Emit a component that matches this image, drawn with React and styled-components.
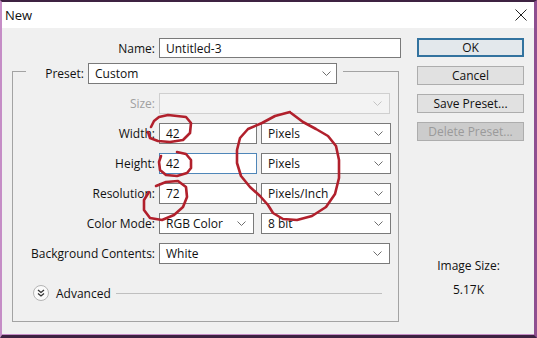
import React from 'react'
import styled, { createGlobalStyle } from 'styled-components'

const uiFont = `'Open Sans', 'Noto Sans', 'Liberation Sans', sans-serif`

const Global = createGlobalStyle`
  html, body {
    margin: 0;
    padding: 0;
    background: #3d2241;
  }
  body {
    font-family: ${uiFont};
    font-size: 12px;
    color: #111;
  }
`

const Page = styled.div`
  position: relative;
  width: 537px;
  height: 338px;
  overflow: hidden;
`

const Window = styled.div`
  width: 537px;
  height: 338px;
  box-sizing: border-box;
  border-top: 2px solid #3d2241;
  border-left: 2px solid #c58dc6;
  border-right: 3px solid #8e4f90;
  border-bottom: 3px solid #3d2241;
  display: flex;
  flex-direction: column;
`

const TitleBar = styled.div`
  height: 26px;
  flex: none;
  background: #fff;
  display: flex;
  align-items: center;
  padding-left: 3px;
  font-size: 13px;
`

const Close = styled.svg`
  margin-left: auto;
  margin-right: 7px;
`

const Body = styled.div`
  flex: 1;
  display: flex;
  background: #f0f0f0;
  border-bottom: 1px solid #c58dc6;
`

const LeftCol = styled.div`
  width: 400px;
  padding-top: 10px;
`

const RightCol = styled.div`
  width: 107px;
  margin-left: 15px;
  padding-top: 10px;
  display: flex;
  flex-direction: column;
  gap: 9px;
`

const Row = styled.div`
  display: flex;
  align-items: center;
  gap: ${({gap = 4}) => gap}px;
`

const Label = styled.div`
  width: ${({w}) => w}px;
  text-align: right;
  white-space: nowrap;
  color: ${({disabled}) => disabled ? '#a0a0a0' : '#111'};
`

const Field = styled.div`
  box-sizing: border-box;
  width: ${({w}) => w}px;
  height: ${({h = 21}) => h}px;
  display: flex;
  align-items: center;
  padding-left: 6px;
  background: ${({disabled}) => disabled ? '#f3f3f3' : '#fff'};
  border: 1px solid ${({focused, disabled}) =>
    focused ? '#4f86b8' : disabled ? '#cfcfcf' : '#7a7a7a'};
  white-space: nowrap;
`

const Arrow = styled.svg`
  margin-left: auto;
  margin-right: ${({mr = 7}) => mr}px;
  flex: none;
`

const GroupBox = styled.fieldset`
  margin: 0 0 0 10px;
  width: 387px;
  box-sizing: border-box;
  border: 1px solid #a3a3a3;
  padding: 9px 0 20px;
  min-width: 0;
`

const Legend = styled.legend`
  margin-left: 13px;
  padding: 5px 6px 0 0;
  display: flex;
  align-items: center;
  gap: 4px;
`

const Rows = styled.div`
  display: flex;
  flex-direction: column;
  gap: 9px;
`

const Advanced = styled.div`
  margin-top: 21px;
  padding-left: 20px;
  padding-right: 16px;
  height: 16px;
  display: flex;
  align-items: center;
`

const Toggle = styled.div`
  width: 16px;
  height: 16px;
  box-sizing: border-box;
  border-radius: 50%;
  border: 1px solid #b4b4b4;
  background: #fafafa;
  display: flex;
  align-items: center;
  justify-content: center;
  margin-right: 7px;
`

const Rule = styled.div`
  flex: 1;
  height: 1px;
  background: #bfbfbf;
  margin-left: 5px;
`

const Button = styled.div`
  box-sizing: border-box;
  height: 19px;
  display: flex;
  align-items: center;
  justify-content: center;
  background: ${({primary, disabled}) =>
    primary ? '#e3e8ec' : disabled ? '#cccccc' : '#e1e1e1'};
  border: ${({primary}) => primary ? '2px solid #33739f' : '1px solid #adadad'};
  color: ${({disabled}) => disabled ? '#9a9a9a' : '#111'};
`

const Info = styled.div`
  margin-top: 108px;
  display: flex;
  flex-direction: column;
  align-items: center;
  gap: 8px;
  line-height: 16px;
  padding-right: 4px;
`

const Marks = styled.svg`
  position: absolute;
  left: 0;
  top: 0;
  pointer-events: none;
`

const Chevron = ({mr, disabled}) => (
  <Arrow mr={mr} width="9" height="5" viewBox="0 0 9 5">
    <polyline points="0.5,0.5 4.5,4.5 8.5,0.5" fill="none"
      stroke={disabled ? '#c4c4c4' : '#6e6e6e'} strokeWidth="1" />
  </Arrow>
)

const Select = ({w, children, disabled, mr}) => (
  <Field w={w} disabled={disabled}>
    {children}
    <Chevron mr={mr} disabled={disabled} />
  </Field>
)

const marks = [
  '151,127 154,121 159,117 168,115 186,117 191,123 190,133 183,140 170,142 158,141 150,138 148,132',
  '177,152 186,154 191,160 191,168 187,173 177,176 166,175 160,170 159,162 161,156',
  '156,186 166,182 178,181 186,187 187,197 183,207 174,215 162,220 150,218 144,210 144,200 149,192',
  '290,112 275,116 262,123 248,129 240,138 237,150 237,163 241,176 250,187 260,196 268,205 273,213 283,219 297,220 312,216 326,207 335,194 339,178 339,160 336,146 328,136 316,129 303,122 291,113'
]

const App = () => (
  <Page>
    <Global />
    <Window>
      <TitleBar>
        New
        <Close width="12" height="12" viewBox="0 0 12 12">
          <path d="M0.5 0.5 L11.5 11.5 M11.5 0.5 L0.5 11.5" stroke="#222" strokeWidth="1" />
        </Close>
      </TitleBar>
      <Body>
        <LeftCol>
          <Row>
            <Label w={153}>Name:</Label>
            <Field w={242} h={20}>Untitled-3</Field>
          </Row>
          <GroupBox>
            <Legend>
              <Label w={58}>Preset:</Label>
              <Select w={249} mr={5}>Custom</Select>
            </Legend>
            <Rows>
              <Row>
                <Label w={142} disabled>Size:</Label>
                <Select w={231} disabled />
              </Row>
              <Row>
                <Label w={142}>Width:</Label>
                <Field w={98}>42</Field>
                <Select w={130}>Pixels</Select>
              </Row>
              <Row>
                <Label w={142}>Height:</Label>
                <Field w={98} focused>42</Field>
                <Select w={130}>Pixels</Select>
              </Row>
              <Row>
                <Label w={142}>Resolution:</Label>
                <Field w={98}>72</Field>
                <Select w={130}>Pixels/Inch</Select>
              </Row>
              <Row>
                <Label w={142}>Color Mode:</Label>
                <Row gap={7}>
                  <Select w={95}>RGB Color</Select>
                  <Select w={130}>8 bit</Select>
                </Row>
              </Row>
              <Row>
                <Label w={142}>Background Contents:</Label>
                <Select w={231}>White</Select>
              </Row>
            </Rows>
            <Advanced>
              <Toggle>
                <svg width="8" height="8" viewBox="0 0 8 8">
                  <polyline points="1,1 4,3.5 7,1" fill="none" stroke="#333" strokeWidth="1.3" />
                  <polyline points="1,4.5 4,7 7,4.5" fill="none" stroke="#333" strokeWidth="1.3" />
                </svg>
              </Toggle>
              Advanced
              <Rule />
            </Advanced>
          </GroupBox>
        </LeftCol>
        <RightCol>
          <Button primary>OK</Button>
          <Button>Cancel</Button>
          <Button>Save Preset...</Button>
          <Button disabled>Delete Preset...</Button>
          <Info>
            <span>Image Size:</span>
            <span>5.17K</span>
          </Info>
        </RightCol>
      </Body>
    </Window>
    <Marks width="537" height="338" viewBox="0 0 537 338">
      {marks.map((p, i) => (
        <polyline key={i} points={p} fill="none" stroke="#b1202c"
          strokeWidth="2.6" strokeLinejoin="round" strokeLinecap="round" />
      ))}
    </Marks>
  </Page>
)

export default App
